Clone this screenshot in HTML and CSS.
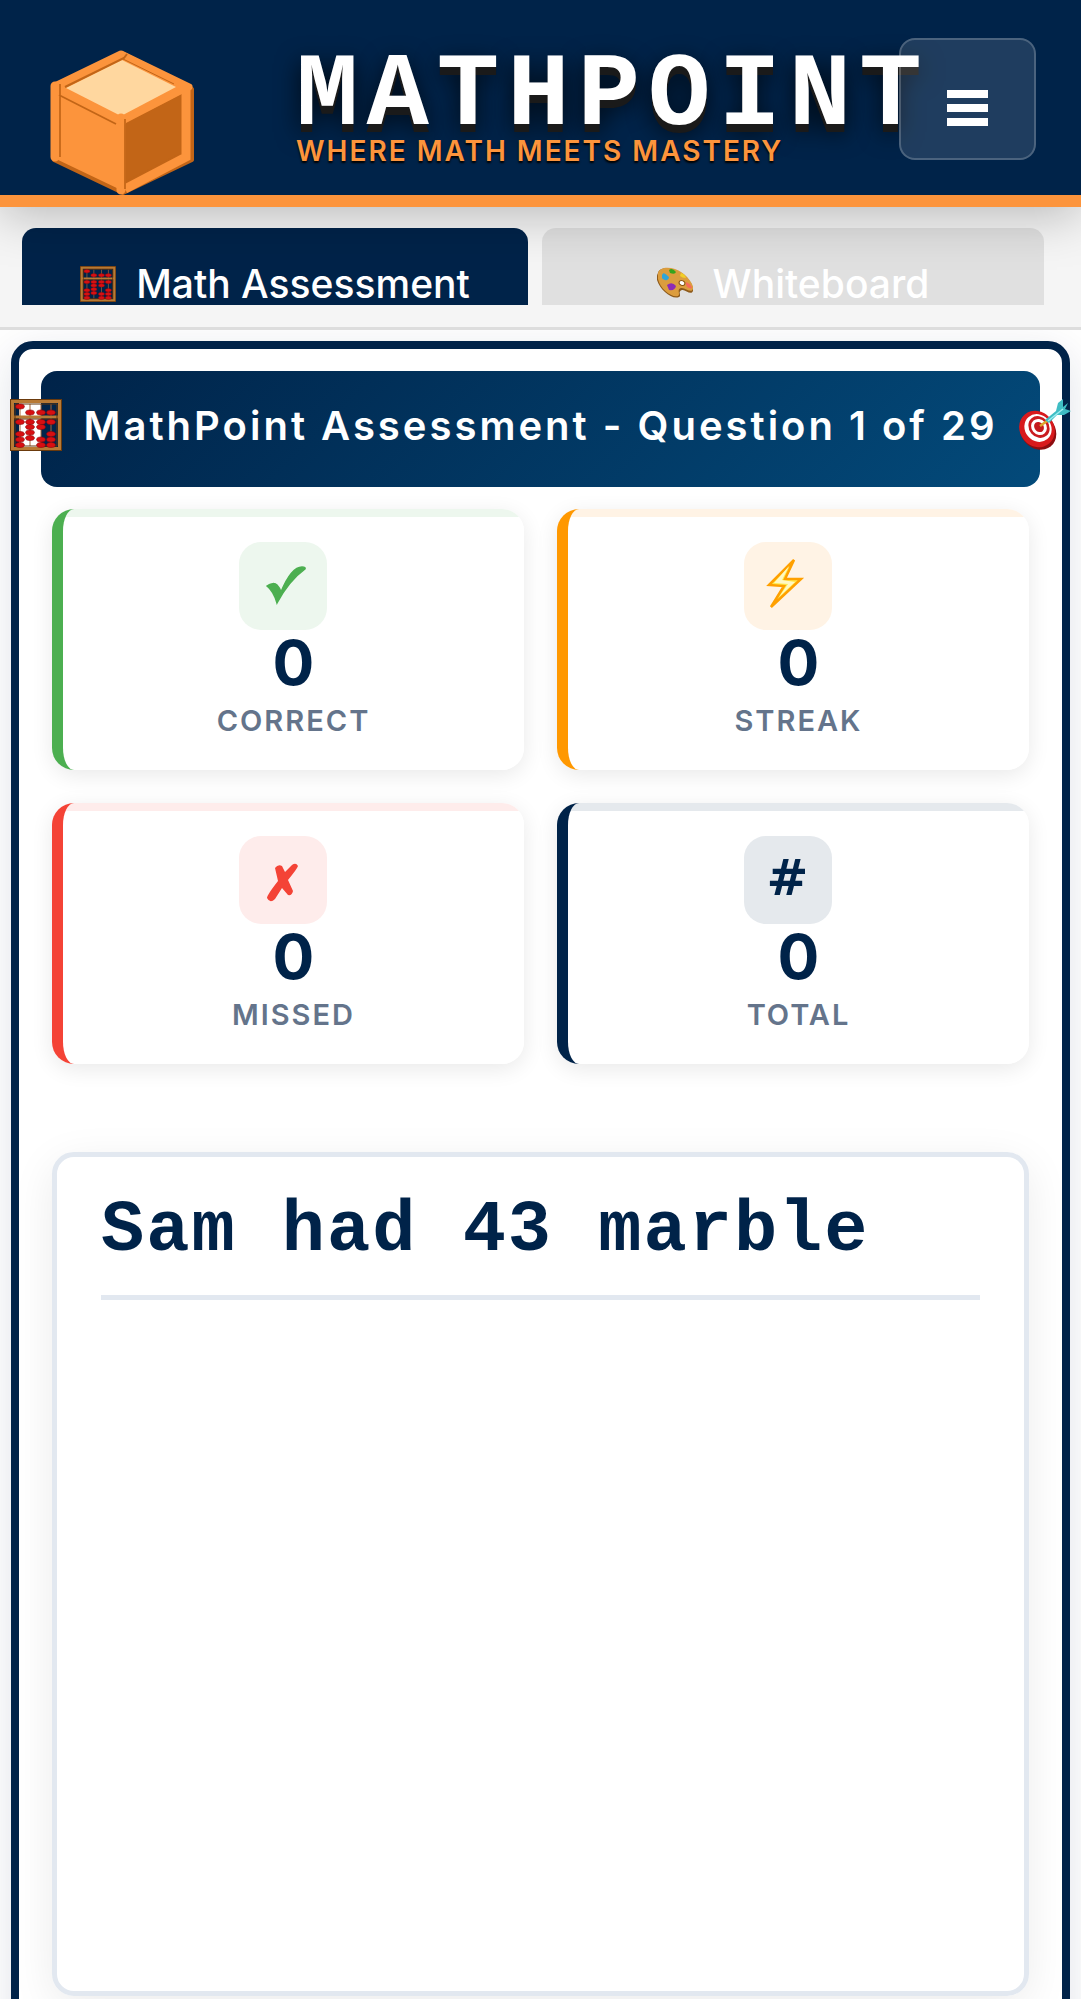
FILE: index.html
```html
<!DOCTYPE html>
<html lang="en">
<head>
<meta charset="utf-8">
<meta name="viewport" content="width=device-width, initial-scale=1">
<title>MathPoint</title>
<link rel="stylesheet" href="styles.css">
</head>
<body>
<svg width="0" height="0" class="sprite" aria-hidden="true">
  <symbol id="abacus" viewBox="0 0 52 52">
    <path d="M10 5v42M20 5v42M31 5v42M41 5v42" stroke="#a5673a" stroke-width="1"/>
    <path d="M2 2h48v48H2z" fill="none" stroke="#6b3a0c" stroke-width="4"/>
    <path d="M2.500 2.500h47v47h-47zM4 18h44" fill="none" stroke="#b87a35" stroke-width="3"/>
    <path d="M4 20h44M5 5h42v42H5z" fill="none" stroke="#5f340d" stroke-width="1"/>
    <g fill="#d80f12" stroke="#8c0508" stroke-width=".6">
      <ellipse cx="10" cy="7.500" rx="4.400" ry="2.500"/><ellipse cx="20" cy="13.500" rx="4.400" ry="2.500"/><ellipse cx="31" cy="13.500" rx="4.400" ry="2.500"/><ellipse cx="41" cy="13.500" rx="4.400" ry="2.500"/>
      <ellipse cx="10" cy="23" rx="4.400" ry="2.500"/><ellipse cx="10" cy="35" rx="4.400" ry="2.500"/><ellipse cx="10" cy="40.500" rx="4.400" ry="2.500"/><ellipse cx="10" cy="46" rx="4.400" ry="2.500"/>
      <ellipse cx="20" cy="23" rx="4.400" ry="2.500"/><ellipse cx="20" cy="28" rx="4.400" ry="2.500"/><ellipse cx="20" cy="33.500" rx="4.400" ry="2.500"/><ellipse cx="20" cy="39" rx="4.400" ry="2.500"/>
      <ellipse cx="31" cy="23" rx="4.400" ry="2.500"/><ellipse cx="31" cy="28" rx="4.400" ry="2.500"/><ellipse cx="31" cy="40.500" rx="4.400" ry="2.500"/><ellipse cx="31" cy="46" rx="4.400" ry="2.500"/>
      <ellipse cx="41" cy="23" rx="4.400" ry="2.500"/><ellipse cx="41" cy="35" rx="4.400" ry="2.500"/><ellipse cx="41" cy="40.500" rx="4.400" ry="2.500"/><ellipse cx="41" cy="46" rx="4.400" ry="2.500"/>
    </g>
  </symbol>
</svg>
<div class="app">
  <header class="header">
    <svg class="logo" viewBox="0 0 147 147" role="img" aria-label="MathPoint cube">
      <path d="M73 5L143 41V112L74 145L5 112V41z" fill="#c26517" stroke="#c26517" stroke-width="4" stroke-linejoin="round"/>
      <path d="M74 73V143L5 110V38z" fill="#fc943c"/>
      <path d="M72 6L140 39L73 74L6 38z" fill="#fc943c" stroke="#fc943c" stroke-width="7" stroke-linejoin="round"/>
      <path d="M73 12L127 39L72 68L17 40z" fill="#ffd79f"/>
      <path d="M77 75L133 46V104L77 133z" fill="#c26517"/>
      <path d="M137 40V109L76 141" fill="none" stroke="#fc943c" stroke-width="9"/>
      <path d="M6 38V109M72 70V142" fill="none" stroke="#fc943c" stroke-width="9" stroke-linecap="round"/>
      <path d="M11 36V109M76 71V141M10 47L67 76" fill="none" stroke="#c26517" stroke-width="1.700"/>
      <path d="M16 39L75 10L78 6" fill="none" stroke="#c26517" stroke-width="2"/>
      <path d="M74 11L125 36" fill="none" stroke="#c26517" stroke-width="1"/>
    </svg>
    <div class="brand">
      <h1 class="brand-name">MATHPOINT</h1>
      <p class="brand-tag">WHERE MATH MEETS MASTERY</p>
    </div>
    <button class="menu" type="button" aria-label="Menu"><span></span><span></span><span></span></button>
  </header>

  <nav class="tabs">
    <button class="tab tab-active" type="button"><svg class="tab-icon"><use href="#abacus"/></svg>Math Assessment</button>
    <button class="tab" type="button">
      <svg class="tab-icon" viewBox="0 0 36 36" aria-hidden="true">
        <path d="M1 7C2 2 10 1 18 4C29 8 37 18 36 25C34 30 28 23 25 24C20 26 25 29 22 31C15 34 3 24 0 14C-.500 11 0 9 1 7z" fill="#8d5a1b"/>
        <path d="M1 7C3 1 11 1 18 3C29 7 37 18 36 23C34 28 28 21 24 22C19 24 24 28 21 30C15 32 3 23 1 13z" fill="#dc9d3e"/>
        <ellipse cx="25" cy="17" rx="3" ry="2.300" transform="rotate(25 25 17)" fill="#fff" stroke="#875211"/>
        <path d="M5 9C7 5 9 9 12 11C12 15 7 15 5 12z" fill="#31a5d8"/>
        <path d="M12 4Q15 1 19 6Q18 9 13 7z" fill="#37a41c"/>
        <path d="M24 7Q28 8 29 12Q25 12 23 10z" fill="#f1cf27"/>
        <path d="M29 16Q34 18 35 22Q31 23 29 19z" fill="#f56a5a"/>
        <path d="M10 19Q15 15 19 20Q18 25 12 24z" fill="#8e2bb5"/>
      </svg>Whiteboard</button>
  </nav>

  <main class="main">
    <section class="card">
      <h2 class="banner">
        <svg class="banner-icon" aria-hidden="true"><use href="#abacus"/></svg>
        <span>MathPoint Assessment - Question 1 of 29</span>
        <svg class="banner-icon" viewBox="0 0 52 52" aria-hidden="true">
          <ellipse cx="19" cy="32" rx="17" ry="20" transform="rotate(-40 19 32)" fill="#8d0d10"/>
          <ellipse cx="18" cy="30" rx="17" ry="19" transform="rotate(-40 18 30)" fill="#d81a1d"/>
          <ellipse cx="19" cy="29" rx="13" ry="14.500" transform="rotate(-40 19 29)" fill="#fff"/>
          <ellipse cx="20" cy="28" rx="10" ry="11.500" transform="rotate(-40 20 28)" fill="#ca1c20"/>
          <ellipse cx="20" cy="28" rx="7.500" ry="8.500" transform="rotate(-40 20 28)" fill="#fff"/>
          <ellipse cx="20" cy="28" rx="4.500" ry="5.500" transform="rotate(-40 20 28)" fill="#c51a1d"/>
          <path d="M21 27L28 22" stroke="#dca72c" stroke-width="2.500"/>
          <path d="M26 21L37 12L39 4L44 0L44 8L49 4L46 10L52 12L45 16L38 16L30 24z" fill="#3fbdc4"/>
          <path d="M29 22L44 10" stroke="#a1edf0" stroke-width="1.500"/>
        </svg>
      </h2>

      <div class="stats">
        <article class="stat stat-correct">
          <div class="stat-icon"><svg viewBox="0 0 88 88"><path d="M28 44C32 41 36 41 38 43C40 45 41 47 42 50C47 38 54 25 63 25Q67 25 66 27C55 35 45 48 38 61C36 54 33 48 28 44z" fill="currentColor" stroke="currentColor" stroke-width="1.500"/></svg></div>
          <div class="stat-value">0</div>
          <div class="stat-label">CORRECT</div>
        </article>
        <article class="stat stat-streak">
          <div class="stat-icon"><svg viewBox="0 0 88 88"><path d="M50 18L25 43L40 44L27 65L57 37L41 37z" fill="#ffe94a" stroke="#ffa000" stroke-width="2.500"/><path d="M45 24L30 41L44 42L35 55L51 40L38 38z" fill="#fff8c4"/></svg></div>
          <div class="stat-value">0</div>
          <div class="stat-label">STREAK</div>
        </article>
        <article class="stat stat-missed">
          <div class="stat-icon"><svg viewBox="0 0 88 88"><path d="M36 32Q39 28 43 30L46 36L53 29Q57 26 59 30Q58 33 49 44L54 55Q53 60 49 59L43 52L36 63Q31 68 28 62Q28 59 39 45z" fill="currentColor"/></svg></div>
          <div class="stat-value">0</div>
          <div class="stat-label">MISSED</div>
        </article>
        <article class="stat stat-total">
          <div class="stat-icon">#</div>
          <div class="stat-value">0</div>
          <div class="stat-label">TOTAL</div>
        </article>
      </div>

      <section class="question">
        <h3 class="question-text">Sam had 43 marble</h3>
      </section>
    </section>
  </main>
</div>
</body>
</html>
```

FILE: styles.css
```css
* { box-sizing: border-box; }

body {
  margin: 0;
  background: #fff;
  color: #002349;
  font-family: Inter, "Liberation Sans", sans-serif;
}

h1, h2, h3, p { margin: 0; }

.sprite { position: absolute; }

.app {
  display: flex;
  flex-direction: column;
  height: 100vh;
  overflow: hidden;
}

.header {
  position: relative;
  z-index: 2;
  flex: none;
  display: flex;
  align-items: flex-start;
  height: 207px;
  padding: 38px 45px 0 49px;
  background: #002349;
  border-bottom: 12px solid #fc943c;
  box-shadow: 0 8px 48px rgba(0, 0, 0, .25);
}

.logo {
  flex: none;
  width: 147px;
  height: 147px;
  margin-top: 10px;
}

.brand {
  flex: 1;
  min-width: 0;
  margin-left: 100px;
  padding-top: 16px;
  white-space: nowrap;
}

.brand-name {
  color: #fff;
  font: bold 104px/84px "Liberation Mono", monospace;
  letter-spacing: 8px;
  text-shadow: 0 8px 0 #1a1a1a, 0 8px 24px rgba(0, 0, 0, .8);
}

.brand-tag {
  color: #fc943c;
  font-size: 28px;
  font-weight: 600;
  line-height: 26px;
  letter-spacing: 2px;
  text-shadow: 0 2px 2px #000;
}

.menu {
  position: relative;
  flex: none;
  display: flex;
  flex-direction: column;
  align-items: center;
  justify-content: center;
  gap: 6px;
  width: 137px;
  height: 122px;
  padding: 18px 0 0;
  background: rgba(255, 255, 255, .12);
  border: 2px solid rgba(255, 255, 255, .2);
  border-radius: 16px;
}

.menu span {
  width: 41px;
  height: 8px;
  background: #fff;
}

.tabs {
  flex: none;
  display: grid;
  grid-template-columns: 506fr 502fr;
  gap: 14px;
  height: 123px;
  padding: 21px 37px 22px 22px;
  background: #f5f5f5;
  border-bottom: 3px solid #ddd;
}

.tab {
  display: flex;
  align-items: flex-start;
  justify-content: center;
  gap: 20px;
  height: 77px;
  padding: 31px 0 0;
  overflow: hidden;
  border: 0;
  border-radius: 14px 14px 0 0;
  background: #e0e0e0;
  color: #fff;
  font: 500 39px/50px Inter, "Liberation Sans", sans-serif;
  white-space: nowrap;
}

.tab-active { background: #002349; }

.tab-icon {
  flex: none;
  width: 36px;
  height: 36px;
  margin-top: 7px;
}

.main {
  flex: 1;
  min-height: 0;
  padding: 11px 11px 0;
  overflow: hidden;
}

.card {
  padding: 22px 22px 60px;
  background: #fff;
  border: 8px solid #002349;
  border-radius: 22px;
  box-shadow: 0 11px 44px rgba(0, 35, 73, .12);
}

.banner {
  display: flex;
  align-items: center;
  justify-content: center;
  gap: 22px;
  height: 116px;
  padding-bottom: 8px;
  border-radius: 16px;
  background: linear-gradient(135deg, #002349, #034a7a);
  color: #fff;
  font-size: 40px;
  font-weight: 600;
  letter-spacing: 3px;
  white-space: nowrap;
}

.banner-icon {
  flex: none;
  width: 52px;
  height: 52px;
}

.stats {
  display: grid;
  grid-template-columns: 1fr 1fr;
  gap: 33px;
  padding: 22px 11px 88px;
}

.stat {
  display: flex;
  flex-direction: column;
  align-items: center;
  height: 261px;
  padding-top: 33px;
  border-left: 11px solid var(--accent);
  border-radius: 22px;
  background: linear-gradient(var(--tint) 8px, #fff 8px);
  box-shadow: 0 5px 22px rgba(0, 0, 0, .09);
}

.stat-correct { --accent: #4caf50; --tint: #edf7ee; }
.stat-streak { --accent: #ff9800; --tint: #fff3e5; }
.stat-missed { --accent: #f44336; --tint: #feeceb; }
.stat-total { --accent: #002349; --tint: #e5e9ed; }

.stat-icon {
  width: 88px;
  height: 88px;
  margin-right: 22px;
  border-radius: 22px;
  background: var(--tint);
  color: var(--accent);
  font: bold 50px/84px "DejaVu Sans", sans-serif;
  text-align: center;
}

.stat-icon svg { display: block; }

.stat-value {
  font-size: 62px;
  font-weight: 700;
  line-height: 66px;
}

.stat-label {
  color: #64748b;
  font-size: 29px;
  font-weight: 600;
  line-height: 50px;
  letter-spacing: 2px;
}

.question {
  min-height: 844px;
  margin: 0 11px;
  padding: 44px;
  border: 5px solid #e2e8f0;
  border-radius: 22px;
  box-shadow: 0 11px 44px rgba(0, 0, 0, .08);
}

.question-text {
  padding-bottom: 34px;
  border-bottom: 5px solid #e2e8f0;
  font: bold 72px/60px "Liberation Mono", monospace;
  letter-spacing: 2px;
  white-space: nowrap;
}
```
